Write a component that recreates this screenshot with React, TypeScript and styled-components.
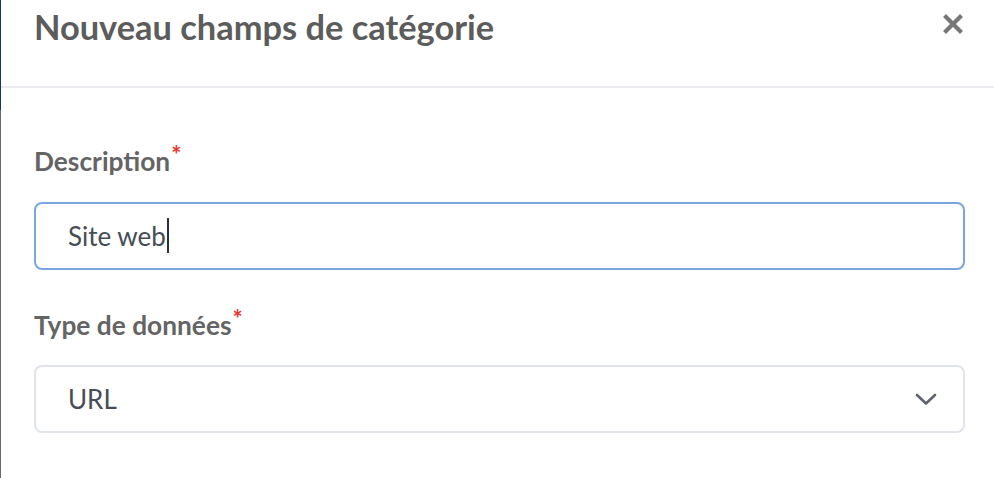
import React from "react";
import styled, { createGlobalStyle } from "styled-components";

const Global = createGlobalStyle`
  html, body { margin: 0; padding: 0; background: #ffffff; }
  body { font-family: Lato, "Open Sans", sans-serif; }
  * { box-sizing: border-box; }
`;

const Page = styled.div`
  display: flex;
  width: 994px;
  height: 478px;
  overflow: hidden;
  background: #ffffff;
`;

const Backdrop = styled.div`
  width: 1px;
  flex: none;
  background: linear-gradient(#17375e 0 110px, #6b6b6b 110px);
`;

const Modal = styled.div`
  flex: 1;
  display: flex;
  flex-direction: column;
`;

const Header = styled.header`
  height: 88px;
  display: flex;
  align-items: flex-start;
  justify-content: space-between;
  padding: 6px 31px 0 33px;
  border-bottom: 2px solid #ebebf0;
`;

const Title = styled.h1`
  margin: 0;
  font-family: Lato, sans-serif;
  font-size: 34.4px;
  line-height: 1.2;
  font-weight: 700;
  color: #5c5c5c;
`;

const CloseButton = styled.button`
  margin-top: 8px;
  width: 20px;
  height: 20px;
  padding: 0;
  border: none;
  background: none;
  display: flex;
  cursor: pointer;
`;

const Body = styled.div`
  padding: 58px 29px 0 33px;
  display: flex;
  flex-direction: column;
`;

const Field = styled.div`
  display: flex;
  flex-direction: column;
  margin-bottom: 40px;
`;

const Label = styled.label`
  font-family: Lato, sans-serif;
  font-size: 26.3px;
  line-height: 1.2;
  font-weight: 700;
  color: #646464;
  margin-bottom: 24px;
`;

const Required = styled.sup`
  color: #e8352c;
  font-size: 24px;
  font-weight: 700;
  line-height: 0;
  position: relative;
  top: 3px;
  margin-left: 1px;
`;

const Control = styled.div<{ $focused?: boolean }>`
  height: 68px;
  border: 2px solid ${(p) => (p.$focused ? "#79a6e2" : "#e1e5ea")};
  border-radius: 8px;
  display: flex;
  align-items: center;
  justify-content: space-between;
  padding: 0 26px 0 32px;
  font-family: Lato, sans-serif;
  font-size: 26px;
  color: #474c55;
`;

const Value = styled.span`
  display: flex;
  align-items: center;
`;

const Caret = styled.span`
  display: inline-block;
  width: 2px;
  height: 35px;
  background: #2b2f36;
  margin-left: 1px;
`;

export default function App() {
  return (
    <>
      <Global />
      <Page>
        <Backdrop />
        <Modal>
          <Header>
            <Title>Nouveau champs de catégorie</Title>
            <CloseButton aria-label="Fermer">
              <svg width="20" height="20" viewBox="0 0 20 20">
                <path d="M3 3 L17 17 M17 3 L3 17" stroke="#777777" strokeWidth="4.2" strokeLinecap="square" />
              </svg>
            </CloseButton>
          </Header>
          <Body>
            <Field>
              <Label>
                Description<Required>*</Required>
              </Label>
              <Control $focused>
                <Value>
                  Site web<Caret />
                </Value>
              </Control>
            </Field>
            <Field>
              <Label>
                Type de données<Required>*</Required>
              </Label>
              <Control>
                <Value>URL</Value>
                <svg width="22" height="13" viewBox="0 0 22 13">
                  <path d="M2 2 L11 10.5 L20 2" fill="none" stroke="#5f6470" strokeWidth="2.6" strokeLinecap="round" strokeLinejoin="round" />
                </svg>
              </Control>
            </Field>
          </Body>
        </Modal>
      </Page>
    </>
  );
}
